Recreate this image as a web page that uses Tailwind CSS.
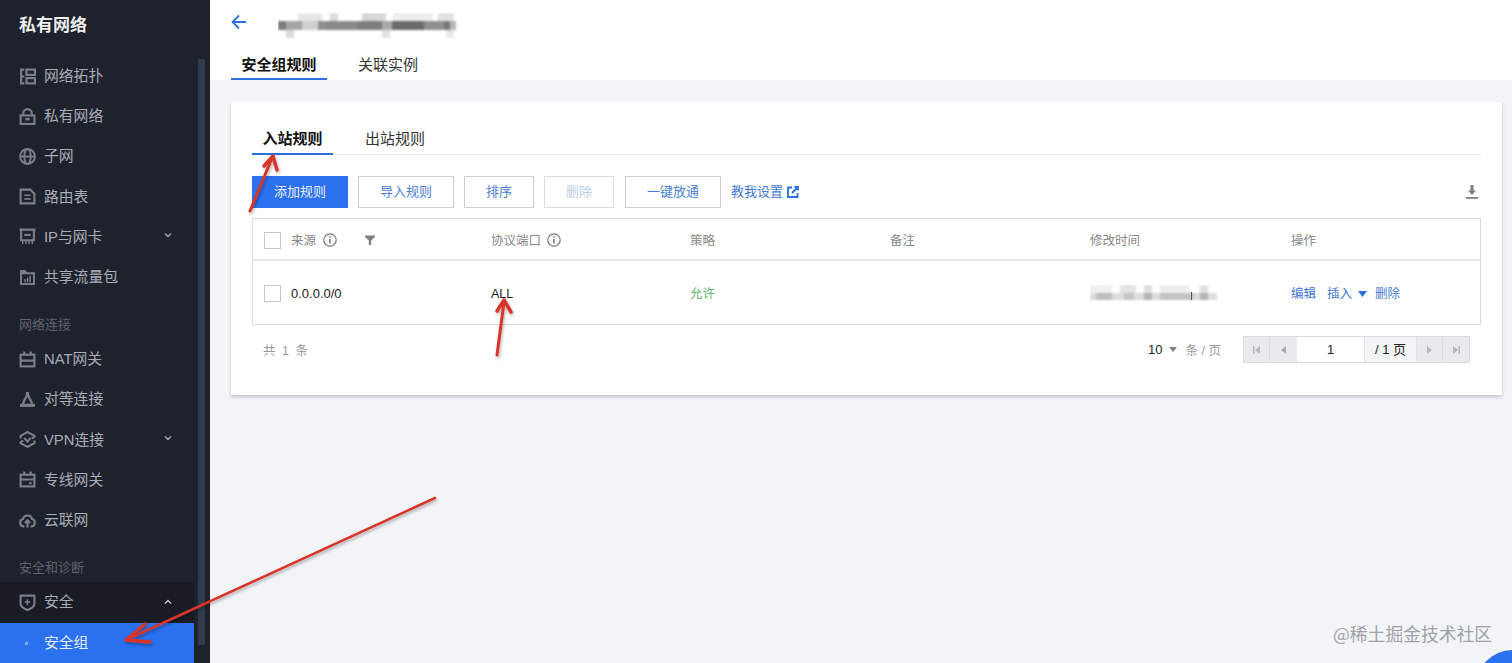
<!doctype html>
<html lang="zh">
<head>
  <meta charset="UTF-8" />
  <title>安全组规则</title>
  <script src="https://cdn.jsdelivr.net/npm/@tailwindcss/browser@4"></script>
</head>
<body class="bg-[#f3f4f8] font-['Liberation_Sans','Noto_Sans_CJK_SC',sans-serif]">
<div class="relative flex w-[1512px] h-[663px] overflow-hidden">

  <!-- Sidebar -->
  <aside class="relative w-[210px] h-full shrink-0 bg-[#1e222d] text-[14.8px] text-[#a8acb5]">
    <div class="h-[56px] pb-[4px] pl-[19px] flex items-center text-[17px] font-bold text-[#eceef1]">私有网络</div>

    <div class="w-[194px]">
      <a class="h-[40.2px] flex items-center pl-[19px]">
        <svg class="w-[17px] h-[17px] mr-[8px]" viewBox="0 0 16 16" fill="none" stroke="#7b7f89" stroke-width="2"><path d="M1 1.500h4M1 8h4M1 14.500h4M2 1v14" /><rect x="7" y="1.500" width="8" height="5" /><rect x="7" y="9.500" width="8" height="5" /></svg>
        网络拓扑
      </a>
      <a class="h-[40.2px] flex items-center pl-[19px]">
        <svg class="w-[17px] h-[17px] mr-[8px]" viewBox="0 0 16 16" fill="none" stroke="#7b7f89" stroke-width="2"><rect x="1.500" y="7" width="13" height="8" /><path d="M4 7V5a4 4 0 0 1 8 0v2" /><path d="M6 10.500h4" stroke-width="2.400" /></svg>
        私有网络
      </a>
      <a class="h-[40.2px] flex items-center pl-[19px]">
        <svg class="w-[17px] h-[17px] mr-[8px]" viewBox="0 0 16 16" fill="none" stroke="#7b7f89" stroke-width="1.800"><circle cx="8" cy="8" r="7" /><ellipse cx="8" cy="8" rx="3" ry="7" /><path d="M1 8h14" /></svg>
        子网
      </a>
      <a class="h-[40.2px] flex items-center pl-[19px]">
        <svg class="w-[17px] h-[17px] mr-[8px]" viewBox="0 0 16 16" fill="none" stroke="#7b7f89" stroke-width="2"><path d="M1.500 1.500h9l4 4v9h-13z" /><path d="M5 6.800h6M5 10.200h6" stroke-width="1.500" /></svg>
        路由表
      </a>
      <a class="h-[40.2px] flex items-center pl-[19px]">
        <svg class="w-[17px] h-[17px] mr-[8px]" viewBox="0 0 16 16" fill="none" stroke="#7b7f89" stroke-width="2"><path d="M0.500 1.500h15M2 1.500v10h12v-10" /><path d="M5 6.500h6" /><path d="M3.500 12v3M6.500 12v3M9.500 12v3M12.500 12v3" stroke-width="1.400" /></svg>
        IP与网卡
        <svg class="w-[8px] h-[8px] ml-auto mr-[22px] -mt-[4px]" viewBox="0 0 8 8" fill="none" stroke="#a8acb5" stroke-width="1.400"><path d="M1 2.500l3 3 3-3" /></svg>
      </a>
      <a class="h-[40.2px] flex items-center pl-[19px]">
        <svg class="w-[17px] h-[17px] mr-[8px]" viewBox="0 0 16 16"><path fill="#7b7f89" d="M1 1h5l1.500 2H15v12H1z" /><rect x="2.800" y="5" width="10.400" height="8.200" fill="#1e222d" /><path d="M5 9.500h1.400v3H5zM7.400 8h1.400v4.500H7.400zM9.800 6.300h1.400v6.200H9.800z" fill="#7b7f89" /></svg>
        共享流量包
      </a>

      <div class="h-[42px] pb-[4px] pl-[19px] flex items-end text-[13px] leading-5 text-[#5f636e]">网络连接</div>

      <a class="h-[40.2px] flex items-center pl-[19px]">
        <svg class="w-[17px] h-[17px] mr-[8px]" viewBox="0 0 16 16" fill="none" stroke="#7b7f89" stroke-width="2"><rect x="1.500" y="3.500" width="13" height="11" /><path d="M5 0.500v3M11 0.500v3M1.500 9h13" /></svg>
        NAT网关
      </a>
      <a class="h-[40.2px] flex items-center pl-[19px]">
        <svg class="w-[17px] h-[17px] mr-[8px]" viewBox="0 0 16 16" fill="none" stroke="#7b7f89" stroke-width="2.200"><path d="M8 3L3.500 12M8 3l4.500 9" /><path d="M6.500 2.500h3" stroke-width="3" /><path d="M1 13.500h14" stroke-width="3" /></svg>
        对等连接
      </a>
      <a class="h-[40.2px] flex items-center pl-[19px]">
        <svg class="w-[17px] h-[17px] mr-[8px]" viewBox="0 0 16 16" fill="none" stroke="#7b7f89" stroke-width="2"><path d="M1.500 7V4.500L8 1l6.500 3.500v1L12 7" /><path d="M14.500 9v2.500L8 15l-6.500-3.500v-1L4 9" /><path d="M5 6.500L8 10l3-3.500" /></svg>
        VPN连接
        <svg class="w-[8px] h-[8px] ml-auto mr-[22px] -mt-[4px]" viewBox="0 0 8 8" fill="none" stroke="#a8acb5" stroke-width="1.400"><path d="M1 2.500l3 3 3-3" /></svg>
      </a>
      <a class="h-[40.2px] flex items-center pl-[19px]">
        <svg class="w-[17px] h-[17px] mr-[8px]" viewBox="0 0 16 16" fill="none" stroke="#7b7f89" stroke-width="2"><rect x="1.500" y="3.500" width="13" height="11" /><path d="M5 0.500v3M11 0.500v3M1.500 8h13M9.500 11.500h2.500" /></svg>
        专线网关
      </a>
      <a class="h-[40.2px] flex items-center pl-[19px]">
        <svg class="w-[17px] h-[17px] mr-[8px]" viewBox="0 0 16 16" fill="none" stroke="#7b7f89" stroke-width="2"><path d="M5 14.500H4.500a3.500 3.500 0 0 1-.7-6.900 4.300 4.300 0 0 1 8.400 0 3.500 3.500 0 0 1-.7 6.900H11" /><path d="M8 15.500V9M5.500 11.300L8 8.800l2.500 2.500" /></svg>
        云联网
      </a>

      <div class="h-[42px] pb-[4px] pl-[19px] flex items-end text-[13px] leading-5 text-[#5f636e]">安全和诊断</div>

      <a class="h-[41px] bg-[#191c25] flex items-center pl-[19px]">
        <svg class="w-[17px] h-[17px] mr-[8px]" viewBox="0 0 16 16" fill="none" stroke="#7b7f89" stroke-width="2"><path d="M1.500 1.500h13v7.500c0 3-3 4.800-6.500 6-3.500-1.200-6.500-3-6.500-6z" /><path d="M8 5v5.500M5.300 7.500h5.400" stroke-width="1.500" /></svg>
        安全
        <svg class="w-[8px] h-[8px] ml-auto mr-[22px] -mt-[2px]" viewBox="0 0 8 8" fill="none" stroke="#c9ccd2" stroke-width="1.400"><path d="M1 5.500l3-3 3 3" /></svg>
      </a>
      <a class="h-[40px] bg-[#2b70ee] flex items-center pl-[25px] text-[#e6eefc]">
        <span class="w-[3px] h-[3px] mr-[16px] bg-[#7fa6ea]"></span>
        安全组
      </a>
    </div>

    <!-- Scrollbar -->
    <div class="absolute left-[198px] top-[59px] w-[7px] h-[586px] bg-[#323b4c]"></div>
  </aside>

  <!-- Main -->
  <main class="flex-1 min-w-0">
    <header class="h-[80px] bg-white pl-[20px] flex flex-col">
      <div class="h-[48px] pt-[13px] flex items-start">
        <svg class="w-[18px] h-[18px]" viewBox="0 0 18 18" fill="none" stroke="#2b6fe0" stroke-width="1.800"><path d="M16 9H2.500M9 2.500L2.500 9 9 15.500" /></svg>
        <svg class="ml-[30px]" width="180" height="28" viewBox="0 0 180 28">
          <g filter="blur(1px)">
            <rect x="20" y="0" width="24" height="8" fill="#e6e6e6" />
            <rect x="52" y="0" width="8" height="8" fill="#dcdcdc" />
            <rect x="84" y="0" width="24" height="8" fill="#d8d8d8" />
            <rect x="115" y="0" width="40" height="8" fill="#eeeeee" />
            <rect x="160" y="0" width="16" height="8" fill="#e2e2e2" />
            <rect x="0" y="8" width="8" height="9" fill="#7d7d7d" />
            <rect x="8" y="8" width="16" height="9" fill="#a5a5a5" />
            <rect x="24" y="8" width="16" height="9" fill="#d0d0d0" />
            <rect x="40" y="8" width="8" height="9" fill="#8f8f8f" />
            <rect x="48" y="8" width="32" height="9" fill="#8a8a8a" />
            <rect x="80" y="8" width="24" height="9" fill="#7d7d7d" />
            <rect x="104" y="8" width="10" height="9" fill="#aaaaaa" />
            <rect x="114" y="8" width="32" height="9" fill="#6a6a6a" />
            <rect x="146" y="8" width="20" height="9" fill="#8f8f8f" />
            <rect x="166" y="8" width="6" height="9" fill="#777777" />
            <rect x="172" y="8" width="6" height="9" fill="#b8b8b8" />
            <rect x="8" y="17" width="8" height="8" fill="#dcdcdc" />
            <rect x="104" y="17" width="8" height="8" fill="#e2e2e2" />
            <rect x="168" y="17" width="8" height="8" fill="#e8e8e8" />
          </g>
        </svg>
      </div>
      <nav class="flex h-[32px] text-[15px] text-[#333]">
        <a class="w-[96px] ml-[1px] h-[32px] flex justify-center pt-[8px] leading-[18px] font-bold text-[#111] border-b-2 border-[#2b6fe0]">安全组规则</a>
        <a class="ml-[31px] pt-[8px] leading-[18px]">关联实例</a>
      </nav>
    </header>

    <div class="pl-[21px] pr-[10px] pt-[22px]">
      <section class="h-[293px] bg-white shadow-[0_2px_3px_rgba(54,58,80,0.25)] px-[21px] pt-[23px] text-[13px]">
        <div class="flex h-[30px] border-b border-[#e5e6ea] text-[15px] text-[#333]">
          <a class="w-[81px] h-[30px] flex justify-center pt-[5px] leading-[18px] font-bold text-[#111] border-b-2 border-[#2b6fe0]">入站规则</a>
          <a class="ml-[32px] pt-[5px] leading-[18px]">出站规则</a>
        </div>

        <div class="flex items-center h-[32px] mt-[21px]">
          <button class="w-[96px] h-[32px] bg-[#2b70ee] text-[#e8f0ff]">添加规则</button>
          <button class="w-[96px] h-[32px] ml-[10px] border border-[#cfd1d6] text-[#4a7fd4]">导入规则</button>
          <button class="w-[70px] h-[32px] ml-[10px] border border-[#cfd1d6] text-[#4a7fd4]">排序</button>
          <button class="w-[70px] h-[32px] ml-[10px] border border-[#d9dbdf] text-[#bccde8]">删除</button>
          <button class="w-[96px] h-[32px] ml-[11px] border border-[#cfd1d6] text-[#4a7fd4]">一键放通</button>
          <a class="ml-[10px] flex items-center -mt-[1px] text-[#3f78d2]">
            教我设置
            <svg class="w-[12px] h-[12px] ml-[4px]" viewBox="0 0 12 12" fill="none" stroke="#2b6fe0" stroke-width="1.800"><path d="M5 1.500H1v9.500h9.500V7" /><path d="M5 7l6-6M7.500 1H11v3.500" /></svg>
          </a>
          <svg class="w-[14px] h-[16px] ml-auto mr-[2px]" viewBox="0 0 14 16" fill="#7f8186"><path d="M5.500 1h3v5.500H11L7 11 3 6.500h2.500z" /><rect x="1" y="13" width="12" height="1.800" /></svg>
        </div>

        <div class="mt-[10px] border border-[#d9dbdf] h-[107px] text-[12.5px]">
          <div class="flex h-[42px] pt-[2px] items-center border-b-2 border-[#e7e8eb] text-[#888]">
            <div class="w-[227px] flex items-center pl-[11px]">
              <span class="w-[17px] h-[17px] border border-[#c4c6cb]"></span>
              <span class="ml-[10px] pt-[2px]">来源</span>
              <svg class="w-[14px] h-[14px] ml-[7px]" viewBox="0 0 14 14" fill="none" stroke="#777" stroke-width="1.200"><circle cx="7" cy="7" r="6.200" /><path d="M7 6v4.500" stroke-width="1.600" /><path d="M7 3.200v1.600" stroke-width="1.600" /></svg>
              <svg class="w-[10px] h-[10px] ml-[28px]" viewBox="0 0 10 10" fill="#7f8186"><path d="M0 0.500h10v1.500L6.200 5.500V10H3.800V5.500L0 2z" /></svg>
            </div>
            <div class="w-[200px] flex items-center pl-[11px]">
              <span class="pt-[2px]">协议端口</span>
              <svg class="w-[14px] h-[14px] ml-[6px]" viewBox="0 0 14 14" fill="none" stroke="#777" stroke-width="1.200"><circle cx="7" cy="7" r="6.200" /><path d="M7 6v4.500" stroke-width="1.600" /><path d="M7 3.200v1.600" stroke-width="1.600" /></svg>
            </div>
            <div class="w-[200px] pl-[10px] pt-[2px]">策略</div>
            <div class="w-[200px] pl-[10px] pt-[2px]">备注</div>
            <div class="w-[200px] pl-[10px] pt-[2px]">修改时间</div>
            <div class="flex-1 pl-[11px] pt-[2px]">操作</div>
          </div>
          <div class="flex h-[63px] pt-[2px] items-center text-[#1a1a1a]">
            <div class="w-[227px] flex items-center pl-[11px]">
              <span class="w-[17px] h-[17px] border border-[#c4c6cb]"></span>
              <span class="ml-[10px] text-[13px]">0.0.0.0/0</span>
            </div>
            <div class="w-[200px] pl-[11px] pt-[2px]">ALL</div>
            <div class="w-[200px] pl-[10px] pt-[2px] text-[#5fb573]">允许</div>
            <div class="w-[200px]"></div>
            <div class="w-[200px] pl-[10px] -mt-[2px]">
              <svg width="128" height="16" viewBox="0 0 128 16">
                <g filter="blur(0.8px)">
                  <rect x="0" y="0" width="22" height="8" fill="#f0f0f0" />
                  <rect x="30" y="0" width="16" height="8" fill="#e4e4e4" />
                  <rect x="54" y="0" width="8" height="8" fill="#dedede" />
                  <rect x="70" y="0" width="30" height="8" fill="#ededed" />
                  <rect x="110" y="0" width="8" height="8" fill="#e0e0e0" />
                  <rect x="0" y="8" width="127" height="7" fill="#dcdcdc" />
                  <rect x="6" y="8" width="16" height="7" fill="#bdbdbd" />
                  <rect x="34" y="8" width="10" height="7" fill="#c4c4c4" />
                  <rect x="54" y="8" width="8" height="7" fill="#b5b5b5" />
                  <rect x="70" y="8" width="34" height="7" fill="#c4c4c4" />
                  <rect x="110" y="8" width="8" height="7" fill="#b5b5b5" />
                </g>
                <rect x="101" y="7" width="1" height="8" fill="#555" />
              </svg>
            </div>
            <div class="flex-1 flex items-center pl-[11px] text-[#3f78d2]">
              <span class="pt-[2px]">编辑</span>
              <span class="ml-[11px] pt-[2px]">插入</span>
              <svg class="w-[9px] h-[6px] ml-[6px]" viewBox="0 0 9 6" fill="#2b6fe0"><path d="M0 0h9L4.500 6z" /></svg>
              <span class="ml-[8px] pt-[2px]">删除</span>
            </div>
          </div>
        </div>

        <div class="flex items-center h-[27px] mt-[11px] text-[12.5px] text-[#999]">
          <span class="ml-[11px] pt-[4px] tracking-[1.500px]">共&nbsp;1&nbsp;条</span>
          <span class="ml-auto text-[#222] text-[13px]">10</span>
          <svg class="w-[8px] h-[5px] ml-[6px]" viewBox="0 0 8 5" fill="#7f8186"><path d="M0 0h8L4 5z" /></svg>
          <span class="ml-[9px] mr-[22px] pt-[3px]">条 / 页</span>
          <div class="flex h-[27px] w-[227px] border border-[#d9dbdf] mr-[11px] text-[#222]">
            <span class="w-[26px] bg-[#e9eaec] border-r border-[#d9dbdf] flex items-center justify-center">
              <svg class="w-[7px] h-[8px]" viewBox="0 0 7 8" fill="#b4b7bc"><path d="M0 0h1.500v8H0zM7 0v8L2 4z" /></svg>
            </span>
            <span class="w-[27px] bg-[#e9eaec] flex items-center justify-center">
              <svg class="w-[5px] h-[8px]" viewBox="0 0 5 8" fill="#a6a9ae"><path d="M5 0v8L0 4z" /></svg>
            </span>
            <span class="w-[67px] bg-white flex items-center justify-center text-[13px]">1</span>
            <span class="w-[53px] bg-[#f3f4f6] border-x border-[#e2e3e6] flex items-center justify-center text-[13px]">/ 1 页</span>
            <span class="w-[26px] bg-[#e9eaec] border-r border-[#d9dbdf] flex items-center justify-center">
              <svg class="w-[5px] h-[8px]" viewBox="0 0 5 8" fill="#b4b7bc"><path d="M0 0v8l5-4z" /></svg>
            </span>
            <span class="flex-1 bg-[#e9eaec] flex items-center justify-center">
              <svg class="w-[7px] h-[8px]" viewBox="0 0 7 8" fill="#b4b7bc"><path d="M0 0v8l5-4zM5.500 0H7v8H5.500z" /></svg>
            </span>
          </div>
        </div>
      </section>
    </div>
  </main>

  <!-- Annotation arrows -->
  <svg class="absolute inset-0 pointer-events-none" width="1512" height="663" viewBox="0 0 1512 663" fill="none" stroke="#d8352a" stroke-linecap="round" stroke-linejoin="round">
    <defs>
      <filter id="arrowShadow" x="-30%" y="-30%" width="160%" height="160%">
        <feDropShadow dx="1" dy="2" stdDeviation="1.500" flood-color="#000" flood-opacity="0.3" />
      </filter>
    </defs>
    <g filter="url(#arrowShadow)">
      <path d="M250 211L272 158" stroke-width="3" />
      <path d="M264 166L273 156L277 170" stroke-width="3.500" />
      <path d="M497 355L504 302" stroke-width="3" />
      <path d="M497 311L504 300L511 312" stroke-width="3.500" />
      <path d="M435 498L128 639" stroke-width="2.500" />
      <path d="M145 624L126 640L150 642" stroke-width="3.500" />
    </g>
  </svg>

  <!-- Watermark -->
  <div class="absolute left-[1333px] top-[621px] text-[17.8px] leading-6 text-[#a0a2a7] font-['Noto_Sans_CJK_SC',sans-serif]">@稀土掘金技术社区</div>
  <div class="absolute left-[1477px] top-[650px] w-[70px] h-[70px] rounded-full bg-[#2b70ee]"></div>
</div>
</body>
</html>
